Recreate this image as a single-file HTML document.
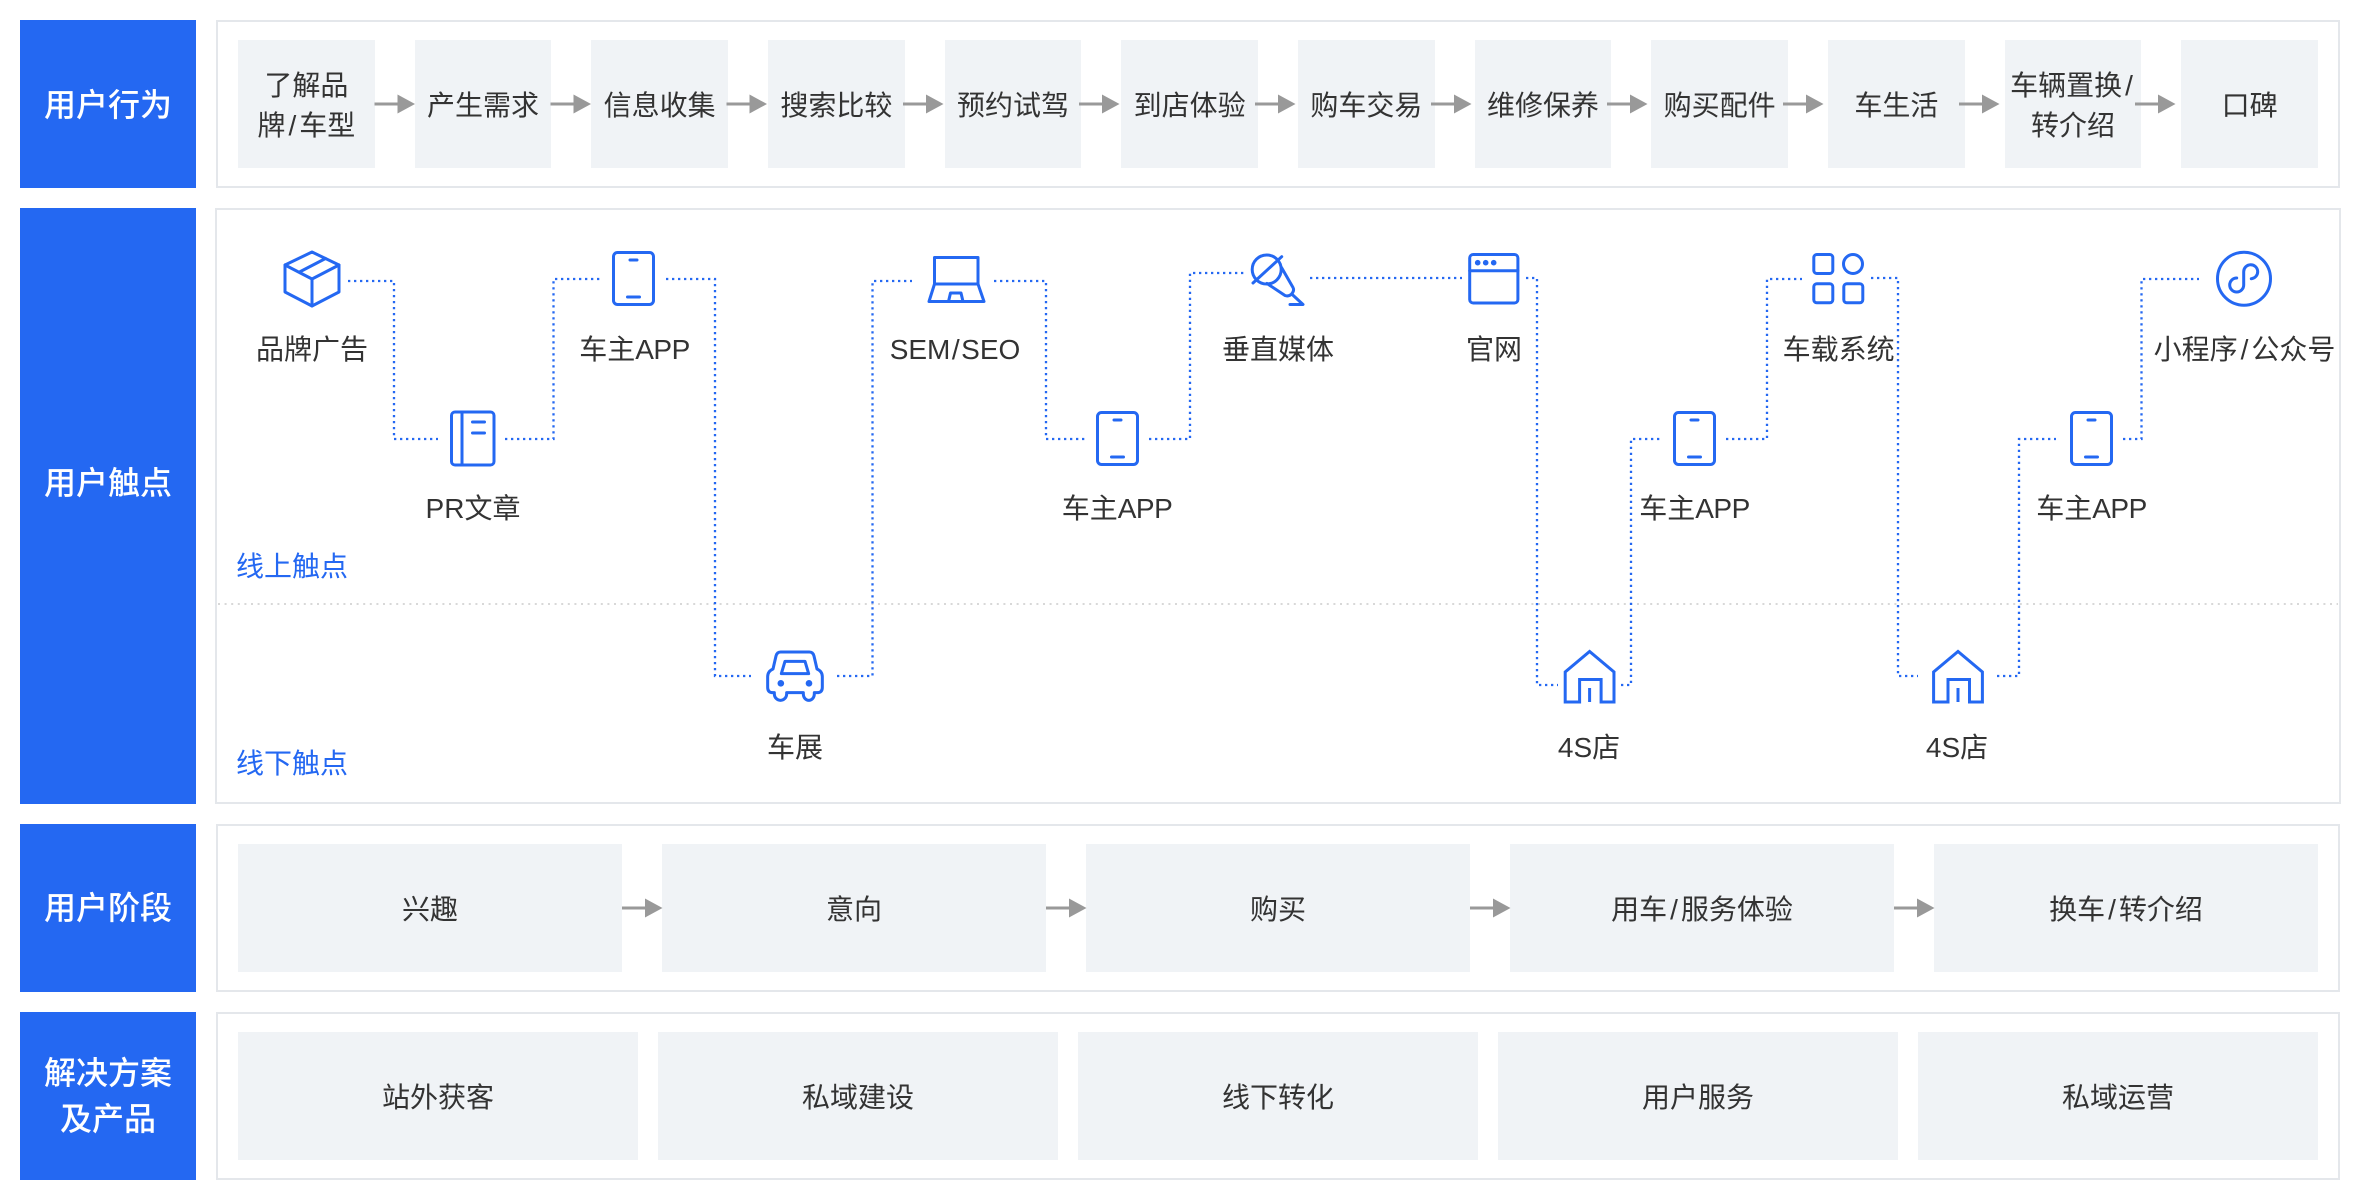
<!DOCTYPE html>
<html lang="zh-CN"><head><meta charset="utf-8"><title>用户旅程</title>
<style>
html,body{margin:0;padding:0;background:#fff}
body{position:relative;width:2360px;height:1200px;overflow:hidden;font-family:"Liberation Sans","Noto Sans CJK SC",sans-serif;font-size:28px;color:#333}
.b{position:absolute;left:20px;width:176px;background:#2468f2}
.t{position:absolute;left:20px;width:176px;text-align:center;color:#fff;font-size:32px;line-height:46px;font-weight:500;white-space:nowrap}
.f{position:absolute;box-sizing:border-box;border:2px solid #e4e7eb;background:#fff}
.i{position:absolute;box-sizing:border-box;padding-top:3px;background:#f0f3f6;display:flex;align-items:center;justify-content:center;text-align:center;line-height:40px}
.l{position:absolute;transform:translateX(-50%);white-space:nowrap;line-height:40px}
.s{position:absolute;left:236px;color:#2468f2;line-height:40px;white-space:nowrap}
.x{margin:0 3px}
.y{margin:0 1.5px}
.a{letter-spacing:-.5px}
.r1{top:40px;width:136.67px;height:128px}
.r3{top:844px;width:384px;height:128px}
.r4{top:1032px;width:400px;height:128px}
svg{position:absolute;left:0;top:0}
</style></head><body>
<div class="b" style="top:20px;height:168px"></div>
<div class="b" style="top:208px;height:596px"></div>
<div class="b" style="top:824px;height:168px"></div>
<div class="b" style="top:1012px;height:168px"></div>
<div class="t" style="top:82px">用户行为</div>
<div class="t" style="top:460px">用户触点</div>
<div class="t" style="top:885px">用户阶段</div>
<div class="t" style="top:1050px">解决方案<br>及产品</div>

<div class="f" style="left:216px;top:20px;width:2124px;height:168px"></div>
<div class="f" style="left:215px;top:208px;width:2126px;height:596px"></div>
<div class="f" style="left:216px;top:824px;width:2124px;height:168px"></div>
<div class="f" style="left:216px;top:1012px;width:2124px;height:168px"></div>

<div class="i r1" style="left:238px"><span>了解品<br>牌<span class="x">/</span>车型</span></div>
<div class="i r1" style="left:414.67px">产生需求</div>
<div class="i r1" style="left:591.33px">信息收集</div>
<div class="i r1" style="left:768px">搜索比较</div>
<div class="i r1" style="left:944.67px">预约试驾</div>
<div class="i r1" style="left:1121.33px">到店体验</div>
<div class="i r1" style="left:1298px">购车交易</div>
<div class="i r1" style="left:1474.67px">维修保养</div>
<div class="i r1" style="left:1651.33px">购买配件</div>
<div class="i r1" style="left:1828px">车生活</div>
<div class="i r1" style="left:2004.67px"><span style="white-space:nowrap">车辆置换<span class="x">/</span><br>转介绍</span></div>
<div class="i r1" style="left:2181.33px">口碑</div>

<div class="i r3" style="left:238px">兴趣</div>
<div class="i r3" style="left:662px">意向</div>
<div class="i r3" style="left:1086px">购买</div>
<div class="i r3" style="left:1510px"><span>用车<span class="x">/</span>服务体验</span></div>
<div class="i r3" style="left:1934px"><span>换车<span class="x">/</span>转介绍</span></div>

<div class="i r4" style="left:238px">站外获客</div>
<div class="i r4" style="left:658px">私域建设</div>
<div class="i r4" style="left:1078px">线下转化</div>
<div class="i r4" style="left:1498px">用户服务</div>
<div class="i r4" style="left:1918px">私域运营</div>

<svg width="2360" height="1200" viewBox="0 0 2360 1200" fill="none">
<defs>
<g id="ar"><rect x="0" y="-1.5" width="24" height="3" fill="#999"/><path d="M23 -9.500L40.500 0L23 9.500Z" fill="#999"/></g>
<g id="ph" stroke="#2468f2" stroke-width="3" stroke-linecap="round"><rect x="1.500" y="1.500" width="40" height="52" rx="4"/><path d="M18 9H25M15.500 46H27.500"/></g>
<g id="ho" stroke="#2468f2" stroke-width="3"><path d="M-24.400 50H-10V27.500H11.500V50H24.400V20L0 -0.500L-24.400 20Z" stroke-linejoin="miter"/><path d="M0 36V50"/></g>
</defs>
<use href="#ar" x="374.500" y="104"/><use href="#ar" x="550.500" y="104"/><use href="#ar" x="726.500" y="104"/><use href="#ar" x="903" y="104"/><use href="#ar" x="1079" y="104"/><use href="#ar" x="1255" y="104"/><use href="#ar" x="1431" y="104"/><use href="#ar" x="1607" y="104"/><use href="#ar" x="1783" y="104"/><use href="#ar" x="1959" y="104"/><use href="#ar" x="2135" y="104"/>
<use href="#ar" x="622" y="908"/><use href="#ar" x="1046" y="908"/><use href="#ar" x="1470" y="908"/><use href="#ar" x="1894" y="908"/>

<path d="M218 604H2338" stroke="#d8d8d8" stroke-width="2" stroke-dasharray="2 4.600"/>
<g stroke="#2468f2" stroke-width="2.300" stroke-dasharray="2.300 3.700">
<path d="M348 281H394V439H438"/>
<path d="M505 439H553.500V279H600"/>
<path d="M666 279H715V676H751"/>
<path d="M837 676H872.500V281H912"/>
<path d="M994 281H1046V439H1085"/>
<path d="M1149 439H1190V273H1244"/>
<path d="M1310 278H1462"/>
<path d="M1526 278H1537V685H1558"/>
<path d="M1621 685H1631V439H1660"/>
<path d="M1726 439H1767V279H1802"/>
<path d="M1871 278H1898V676H1918"/>
<path d="M1997 676H2019V439H2056"/>
<path d="M2123 439H2141.500V279H2199"/>
</g>

<!-- box -->
<g stroke="#2468f2" stroke-width="3" stroke-linejoin="round" stroke-linecap="round">
<path d="M312 252L339 265V292L312 306L285 292V265Z"/><path d="M285 265L312 279L339 265M312 279V306M299.500 272L325.500 258.500"/>
<!-- doc -->
<rect x="451.500" y="412" width="42.500" height="53" rx="3.500"/><path d="M462 412V465M472.500 422H484.500M472.500 433H484.500"/>
<!-- laptop -->
<path d="M934.500 284V257.500H978V284M934.500 284H978L984 301.500H929Z"/><path d="M948.500 301.500L950.500 293H961L963 301.500"/>
<!-- mic -->
<circle cx="1266.700" cy="269.500" r="14.500"/><path d="M1281.700 256.700L1253 283M1267 283.500L1285 295.500Q1289 297 1292 293.500Q1294.500 290.500 1293 287.500L1281.500 267.500M1291.700 294L1303 304.500H1290"/>
<!-- browser -->
<rect x="1469.700" y="254.500" width="48.200" height="48.500" rx="3.500"/><path d="M1469.700 270.700H1517.900"/>
<!-- grid -->
<rect x="1813.800" y="254.500" width="19" height="19" rx="3"/><circle cx="1853" cy="264" r="9.500"/><rect x="1813.800" y="283.800" width="19" height="19" rx="3"/><rect x="1843.800" y="283.800" width="19" height="19" rx="3"/>
<!-- mini app -->
<circle cx="2244" cy="278.700" r="26.500"/><path d="M2236.700 278A7 7 0 1 0 2243.700 285V271.700A7 7 0 1 1 2251.300 278.700"/>
</g>
<g fill="#2468f2"><circle cx="1477.700" cy="262.700" r="2.800"/><circle cx="1485.700" cy="262.700" r="2.800"/><circle cx="1493.700" cy="262.700" r="2.800"/></g>
<use href="#ph" x="612" y="251"/><use href="#ph" x="1096" y="411"/><use href="#ph" x="1673" y="411"/><use href="#ph" x="2070" y="411"/>
<!-- car -->
<g transform="translate(740 630) scale(.3333)" stroke="#2468f2" stroke-width="9" stroke-linejoin="round">
<path d="M122 66H208Q219 66 222 78L231 117Q247 124 247 140V172Q247 188 231 188H223V192A16.500 19 0 0 1 190 192V188H140V192A18.500 19 0 0 1 103 192V188H99Q83 188 83 172V140Q83 124 99 117L108 78Q111 66 122 66Z"/>
<path d="M135 94H195L206 131H124Z"/>
<circle cx="122.500" cy="160" r="10" fill="#2468f2" stroke="none"/><circle cx="207" cy="160" r="10" fill="#2468f2" stroke="none"/>
</g>
<use href="#ho" x="1589.600" y="652"/><use href="#ho" x="1958" y="652"/>
</svg>

<div class="l" style="left:312px;top:330px">品牌广告</div>
<div class="l" style="left:634.500px;top:330px">车主<span class="a">APP</span></div>
<div class="l" style="left:473px;top:489px">PR文章</div>
<div class="l" style="left:795px;top:728px">车展</div>
<div class="l" style="left:955px;top:330px">SEM<span class="y">/</span>SEO</div>
<div class="l" style="left:1117px;top:489px">车主<span class="a">APP</span></div>
<div class="l" style="left:1278px;top:330px">垂直媒体</div>
<div class="l" style="left:1494px;top:330px">官网</div>
<div class="l" style="left:1589px;top:728px">4S店</div>
<div class="l" style="left:1694.500px;top:489px">车主<span class="a">APP</span></div>
<div class="l" style="left:1838.600px;top:330px">车载系统</div>
<div class="l" style="left:1957px;top:728px">4S店</div>
<div class="l" style="left:2091.500px;top:489px">车主<span class="a">APP</span></div>
<div class="l" style="left:2244.500px;top:330px">小程序<span class="x">/</span>公众号</div>
<div class="s" style="top:547px">线上触点</div>
<div class="s" style="top:744px">线下触点</div>
</body></html>
